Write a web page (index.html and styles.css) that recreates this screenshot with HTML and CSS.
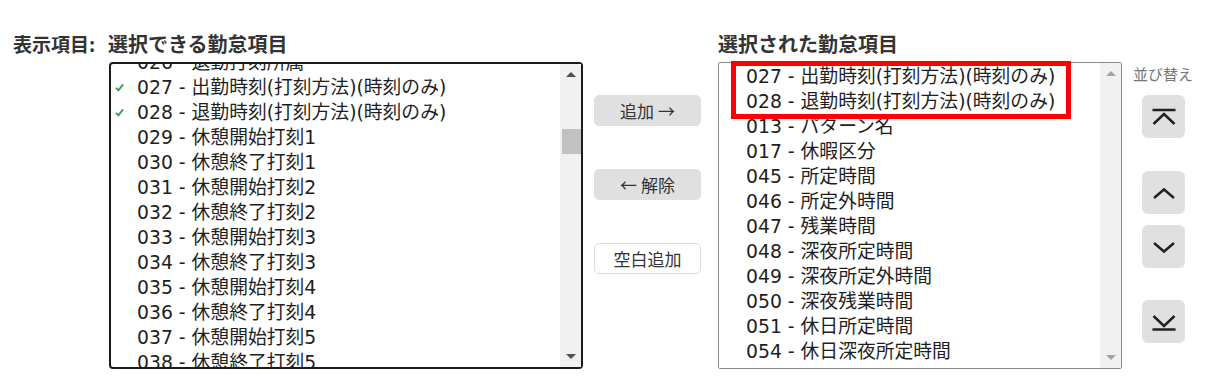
FILE: index.html
```html
<!DOCTYPE html>
<html lang="ja">
<head>
<meta charset="utf-8">
<title>表示項目</title>
<link rel="stylesheet" href="styles.css">
</head>
<body>
<div class="page">
  <div class="lbl">表示項目:</div>

  <div class="col col-left">
    <h2 class="hd">選択できる勤怠項目</h2>
    <div class="listbox focused">
      <div class="items">
        <div class="rows scrolled">
          <div class="item"><span class="slot"></span>026 - 退勤打刻所属</div>
          <div class="item"><span class="slot"><svg class="chk" viewBox="0 0 10 10"><path d="M1 5.4 L3.8 8.2 L9 1.6" /></svg></span>027 - 出勤時刻(打刻方法)(時刻のみ)</div>
          <div class="item"><span class="slot"><svg class="chk" viewBox="0 0 10 10"><path d="M1 5.4 L3.8 8.2 L9 1.6" /></svg></span>028 - 退勤時刻(打刻方法)(時刻のみ)</div>
          <div class="item"><span class="slot"></span>029 - 休憩開始打刻1</div>
          <div class="item"><span class="slot"></span>030 - 休憩終了打刻1</div>
          <div class="item"><span class="slot"></span>031 - 休憩開始打刻2</div>
          <div class="item"><span class="slot"></span>032 - 休憩終了打刻2</div>
          <div class="item"><span class="slot"></span>033 - 休憩開始打刻3</div>
          <div class="item"><span class="slot"></span>034 - 休憩終了打刻3</div>
          <div class="item"><span class="slot"></span>035 - 休憩開始打刻4</div>
          <div class="item"><span class="slot"></span>036 - 休憩終了打刻4</div>
          <div class="item"><span class="slot"></span>037 - 休憩開始打刻5</div>
          <div class="item"><span class="slot"></span>038 - 休憩終了打刻5</div>
        </div>
      </div>
      <div class="sbar">
        <div class="arr"><span class="tri up"></span></div>
        <div class="track"><div class="thumb"></div></div>
        <div class="arr"><span class="tri down"></span></div>
      </div>
    </div>
  </div>

  <div class="mid">
    <button class="btn gray">追加 →</button>
    <button class="btn gray">← 解除</button>
    <button class="btn white">空白追加</button>
  </div>

  <div class="col col-right">
    <h2 class="hd">選択された勤怠項目</h2>
    <div class="listbox plain">
      <div class="items">
        <div class="rows top">
          <div class="item wide"><span class="slot"></span>027 - 出勤時刻(打刻方法)(時刻のみ)</div>
          <div class="item wide"><span class="slot"></span>028 - 退勤時刻(打刻方法)(時刻のみ)</div>
          <div class="item wide"><span class="slot"></span>013 - パターン名</div>
          <div class="item wide"><span class="slot"></span>017 - 休暇区分</div>
          <div class="item wide"><span class="slot"></span>045 - 所定時間</div>
          <div class="item wide"><span class="slot"></span>046 - 所定外時間</div>
          <div class="item wide"><span class="slot"></span>047 - 残業時間</div>
          <div class="item wide"><span class="slot"></span>048 - 深夜所定時間</div>
          <div class="item wide"><span class="slot"></span>049 - 深夜所定外時間</div>
          <div class="item wide"><span class="slot"></span>050 - 深夜残業時間</div>
          <div class="item wide"><span class="slot"></span>051 - 休日所定時間</div>
          <div class="item wide"><span class="slot"></span>054 - 休日深夜所定時間</div>
        </div>
      </div>
      <div class="sbar disabled">
        <div class="arr"><span class="tri up"></span></div>
        <div class="track"></div>
        <div class="arr"><span class="tri down"></span></div>
      </div>
      <div class="mark"></div>
    </div>
  </div>

  <div class="sort">
    <div class="sort-lbl">並び替え</div>
    <button class="sbtn first"><svg viewBox="0 0 24 24"><path d="M0.5 5 H23.5 M1.5 19 L12 9 L22.5 19" /></svg></button>
    <button class="sbtn up"><svg viewBox="0 0 24 24"><path d="M2 17 L12 8.5 L22 17" /></svg></button>
    <button class="sbtn down"><svg viewBox="0 0 24 24"><path d="M2 8 L12 16.5 L22 8" /></svg></button>
    <button class="sbtn last"><svg viewBox="0 0 24 24"><path d="M1.5 6 L12 16 L22.5 6 M0.5 19.5 H23.5" /></svg></button>
  </div>
</div>
</body>
</html>
```

FILE: styles.css
```css
* { box-sizing: border-box; }

html, body {
  margin: 0;
  padding: 0;
  background: #ffffff;
}

body {
  font-family: "Open Sans", "Noto Sans CJK JP", sans-serif;
  color: #222;
}

.page {
  display: flex;
  align-items: flex-start;
  padding: 31px 0 0 13px;
}

.lbl {
  width: 95px;
  font-family: "Noto Sans CJK JP", sans-serif;
  font-weight: 700;
  font-size: 19px;
  line-height: 26px;
  color: #333;
}

.col {
  display: flex;
  flex-direction: column;
}

.col-left { width: 475px; }
.col-right { width: 404px; margin-left: 17px; }

.hd {
  margin: 0 0 5px 0;
  font-family: "Noto Sans CJK JP", sans-serif;
  font-weight: 700;
  font-size: 20px;
  line-height: 26px;
  color: #333;
}

.listbox {
  position: relative;
  display: flex;
  height: 307px;
  background: #fff;
}

.col-left .listbox { margin-left: 1px; }

.listbox.focused {
  border: 2px solid #1b1b1b;
  border-radius: 4px;
}

.listbox.plain {
  border: 1px solid #8a8a8a;
  border-radius: 2px;
}

.items {
  flex: 1;
  overflow: hidden;
}

.rows.scrolled { margin-top: -14px; }
.rows.top { margin-top: 1px; }

.item {
  display: flex;
  align-items: center;
  height: 25px;
  font-family: "DejaVu Sans", "Noto Sans CJK JP", sans-serif;
  font-size: 18.8px;
  line-height: 25px;
  white-space: nowrap;
  color: #1e1e1e;
}

.slot {
  display: flex;
  align-items: center;
  width: 26px;
  padding-left: 4px;
  flex: none;
}

.item.wide .slot { width: 27px; }

.chk {
  width: 9px;
  height: 9px;
  fill: none;
  stroke: #3a9b5c;
  stroke-width: 2.1;
}

.sbar {
  width: 21px;
  flex: none;
  display: flex;
  flex-direction: column;
  background: #f1f1f1;
}

.arr {
  height: 21px;
  flex: none;
  display: flex;
  align-items: center;
  justify-content: center;
}

.tri {
  width: 0;
  height: 0;
  border-left: 5px solid transparent;
  border-right: 5px solid transparent;
}

.tri.up { border-bottom: 5px solid #505050; }
.tri.down { border-top: 5px solid #505050; }

.disabled .tri.up { border-bottom-color: #a3a3a3; }
.disabled .tri.down { border-top-color: #a3a3a3; }

.track {
  flex: 1;
  padding: 0 0 0 2px;
}

.thumb {
  margin-top: 44px;
  height: 25px;
  background: #c1c1c1;
}

.mark {
  position: absolute;
  left: 12px;
  top: -2px;
  width: 340px;
  height: 58px;
  border: 5px solid #ff0000;
}

.mid {
  width: 107px;
  margin-left: 11px;
  padding-top: 64px;
  display: flex;
  flex-direction: column;
  gap: 43px;
}

.btn {
  height: 31px;
  width: 107px;
  border-radius: 5px;
  font-family: "Noto Sans CJK JP", sans-serif;
  font-size: 17px;
  line-height: 29px;
  color: #333;
  padding: 0;
}

.btn.gray {
  background: #e0e0e0;
  border: 1px solid #e0e0e0;
}

.btn.white {
  background: #fff;
  border: 1px solid #dcdcdc;
}

.sort {
  margin-left: 11px;
  padding-top: 33px;
  display: flex;
  flex-direction: column;
  align-items: flex-start;
}

.sort-lbl {
  font-family: "Noto Sans CJK JP", sans-serif;
  font-size: 15px;
  line-height: 20px;
  color: #777;
  white-space: nowrap;
}

.sbtn {
  width: 43px;
  height: 43px;
  margin-left: 9px;
  padding: 0;
  border: none;
  border-radius: 6px;
  background: #e0e0e0;
  display: flex;
  align-items: center;
  justify-content: center;
}

.sbtn svg {
  width: 24px;
  height: 24px;
  fill: none;
  stroke: #222;
  stroke-width: 2.5;
}

.sbtn.first { margin-top: 11px; }
.sbtn.up { margin-top: 33px; }
.sbtn.down { margin-top: 11px; }
.sbtn.last { margin-top: 32px; }
```
